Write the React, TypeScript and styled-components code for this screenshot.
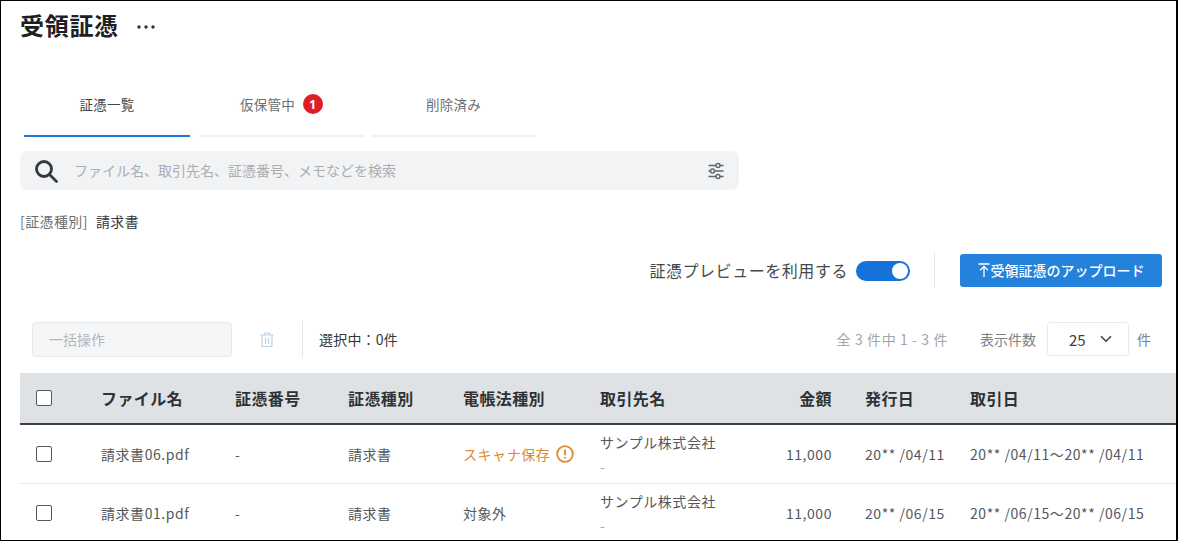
import React from 'react'
import styled, { createGlobalStyle } from 'styled-components'

const GlobalStyle = createGlobalStyle`
    html, body {
        margin: 0;
        padding: 0;
        background: #fff;
    }
    body {
        font-family: 'Noto Sans CJK JP', 'Noto Sans', sans-serif;
        color: #3b4043;
    }
    * {
        box-sizing: border-box;
    }
`

const Frame = styled.div`
    width: 1178px;
    height: 541px;
    border: 1px solid #000;
    border-right-width: 2px;
    overflow: hidden;
    background: #fff;
    padding: 0 0 0 19px;
`

const TitleRow = styled.div`
    display: flex;
    align-items: center;
    height: 48px;
    gap: 17px;
`

const Title = styled.h1`
    margin: 0;
    font-size: 24px;
    letter-spacing: 0.7px;
    line-height: 48px;
    font-weight: 700;
    color: #1d2022;
`

const MoreDots = styled.svg`
    width: 20px;
    height: 6px;
    margin-top: 3px;
    fill: #2e3235;
`

const Tabs = styled.div`
    display: flex;
    margin: 36px 0 0 4px;
`

const TabItem = styled.div<{ $active?: boolean; $width: number; $gap: number }>`
    width: ${p => p.$width}px;
    margin-right: ${p => p.$gap}px;
    height: 52px;
    display: flex;
    align-items: center;
    justify-content: center;
    gap: 8px;
    padding-bottom: 12px;
    font-size: 13.5px;
    letter-spacing: 0.2px;
    color: ${p => (p.$active ? '#3f4448' : '#6b7074')};
    border-bottom: 2px solid ${p => (p.$active ? '#1f78d1' : '#f1f2f3')};
`

const Badge = styled.span`
    width: 20px;
    height: 20px;
    border-radius: 50%;
    background: #dc1e26;
    color: #fff;
    font-family: 'Noto Sans', sans-serif;
    font-size: 12px;
    font-weight: 700;
    display: flex;
    align-items: center;
    justify-content: center;
`

const SearchBar = styled.div`
    width: 719px;
    height: 39px;
    margin-top: 14px;
    background: #f1f3f5;
    border-radius: 8px;
    display: flex;
    align-items: center;
    padding: 0 15px 0 13px;
    gap: 15px;
`

const SearchText = styled.span`
    flex: 1;
    font-size: 14px;
    color: #a9aeb3;
    padding-bottom: 1px;
`

const FilterLine = styled.div`
    margin-top: 21px;
    height: 20px;
    display: flex;
    align-items: center;
    gap: 8px;
    font-size: 14px;
    letter-spacing: 0.4px;
`

const FilterKey = styled.span`
    color: #6b7074;
`

const FilterValue = styled.span`
    color: #35393c;
`

const ActionRow = styled.div`
    display: flex;
    align-items: center;
    justify-content: flex-end;
    height: 34px;
    margin-top: 22px;
    padding-right: 14px;
`

const PreviewLabel = styled.span`
    font-size: 16px;
    letter-spacing: 0.55px;
    color: #45494d;
    margin-right: 8px;
`

const Toggle = styled.div`
    width: 54px;
    height: 20px;
    margin-top: 1px;
    border-radius: 10px;
    background: #1472d8;
    display: flex;
    align-items: center;
    justify-content: flex-end;
    padding-right: 2px;
`

const ToggleKnob = styled.span`
    width: 16px;
    height: 16px;
    border-radius: 50%;
    background: #fff;
`

const VDivider = styled.span<{ $height: number; $ml: number; $mr: number }>`
    width: 1px;
    height: ${p => p.$height}px;
    margin: 0 ${p => p.$mr}px 0 ${p => p.$ml}px;
    background: #e3e5e7;
`

const UploadButton = styled.button`
    width: 202px;
    height: 33px;
    border: none;
    border-radius: 3px;
    background: #2582dc;
    color: #fff;
    font-family: inherit;
    font-size: 14px;
    font-weight: 500;
    display: flex;
    align-items: center;
    justify-content: center;
    gap: 1px;
    padding: 0;
`

const BulkRow = styled.div`
    display: flex;
    align-items: center;
    height: 36px;
    margin-top: 34px;
    padding: 0 25px 0 12px;
`

const BulkSelect = styled.div`
    width: 200px;
    height: 35px;
    border: 1px solid #e8eaec;
    border-radius: 3px;
    background: #f5f6f7;
    color: #b3b7bb;
    font-size: 14px;
    display: flex;
    align-items: center;
    padding-left: 16px;
`

const TrashIcon = styled.svg`
    width: 14px;
    height: 15px;
    margin-left: 28px;
    fill: none;
    stroke: #bcd2e6;
    stroke-width: 1.2;
`

const SelectedText = styled.span`
    font-size: 14px;
    letter-spacing: 0.2px;
    color: #35393c;
`

const Pager = styled.div`
    margin-left: auto;
    display: flex;
    align-items: center;
`

const CountText = styled.span`
    font-size: 14px;
    letter-spacing: 0.6px;
    color: #a2a6aa;
    margin-right: 32px;
`

const PageLabel = styled.span`
    font-size: 14px;
    color: #7d8286;
`

const PageSelect = styled.div`
    width: 82px;
    height: 34px;
    margin: 0 8px 0 11px;
    border: 1px solid #e8eaec;
    border-radius: 3px;
    display: flex;
    align-items: center;
    padding-left: 21px;
    gap: 14px;
    font-size: 15px;
    color: #3b4043;
`

const Table = styled.table`
    width: 100%;
    margin-top: 16px;
    border-collapse: collapse;
    table-layout: fixed;
`

const HeadCell = styled.th<{ $width: number; $right?: boolean; $pl?: number }>`
    width: ${p => p.$width}px;
    height: 51px;
    padding: 0 0 0 ${p => p.$pl ?? 0}px;
    background: #dfe2e5;
    border-bottom: 2px solid #3a4046;
    font-size: 16px;
    letter-spacing: 0.4px;
    font-weight: 700;
    color: #2e3235;
    text-align: ${p => (p.$right ? 'right' : 'left')};
`

const Row = styled.tr`
    height: 59px;
    border-bottom: 1px solid #e8eaec;
`

const Cell = styled.td<{ $right?: boolean; $nowrap?: boolean; $pl?: number }>`
    padding: 0 0 0 ${p => p.$pl ?? 0}px;
    font-size: 14px;
    letter-spacing: 0.55px;
    color: #53585c;
    text-align: ${p => (p.$right ? 'right' : 'left')};
    white-space: ${p => (p.$nowrap ? 'nowrap' : 'normal')};
`

const CheckWrap = styled.div`
    display: flex;
    padding-left: 16px;
`

const CheckBox = styled.span`
    width: 16px;
    height: 16px;
    border: 1.5px solid #54595d;
    border-radius: 2px;
    background: #fff;
`

const Warn = styled.span`
    display: inline-flex;
    align-items: center;
    gap: 6px;
    color: #dd8a2c;
`

const PartnerName = styled.div`
    line-height: 18px;
`

const PartnerSub = styled.div`
    line-height: 18px;
    margin-top: 6px;
    color: #a2a6aa;
`

interface Doc {
    file: string
    law: string
    warn?: boolean
    issued: string
    from: string
}

const DOCS: Doc[] = [
    { file: '請求書06.pdf', law: 'スキャナ保存', warn: true, issued: '20** /04/11', from: '20** /04/11～20** /04/11' },
    { file: '請求書01.pdf', law: '対象外', issued: '20** /06/15', from: '20** /06/15～20** /06/15' },
]

const App: React.FC = () => {
    return (
        <Frame>
            <GlobalStyle />
            <TitleRow>
                <Title>受領証憑</Title>
                <MoreDots viewBox="0 0 20 6">
                    <circle cx="3" cy="3" r="1.7" />
                    <circle cx="10" cy="3" r="1.7" />
                    <circle cx="17" cy="3" r="1.7" />
                </MoreDots>
            </TitleRow>
            <Tabs>
                <TabItem $active $width={166} $gap={9}>証憑一覧</TabItem>
                <TabItem $width={165} $gap={7}>
                    仮保管中
                    <Badge>1</Badge>
                </TabItem>
                <TabItem $width={165} $gap={0}>削除済み</TabItem>
            </Tabs>
            <SearchBar>
                <svg width="26" height="26" viewBox="0 0 26 26" fill="none" stroke="#33393e" strokeWidth="2.8">
                    <circle cx="11" cy="11" r="7.5" />
                    <path d="M16.5 16.5 L23.5 23.5" strokeLinecap="round" />
                </svg>
                <SearchText>ファイル名、取引先名、証憑番号、メモなどを検索</SearchText>
                <svg width="16" height="18" viewBox="0 0 16 18" fill="none" stroke="#5e666d" strokeWidth="1.4">
                    <path d="M0.5 3.5H8M12 3.5H15.5M0.5 9H2.5M6.5 9H15.5M0.5 14.5H8M12 14.5H15.5" />
                    <circle cx="10" cy="3.5" r="2" />
                    <circle cx="4.5" cy="9" r="2" />
                    <circle cx="10" cy="14.5" r="2" />
                </svg>
            </SearchBar>
            <FilterLine>
                <FilterKey>[証憑種別]</FilterKey>
                <FilterValue>請求書</FilterValue>
            </FilterLine>
            <ActionRow>
                <PreviewLabel>証憑プレビューを利用する</PreviewLabel>
                <Toggle>
                    <ToggleKnob />
                </Toggle>
                <VDivider $height={36} $ml={24} $mr={25} />
                <UploadButton>
                    <svg width="12" height="15" viewBox="0 0 12 15" fill="none" stroke="#fff" strokeWidth="1.3">
                        <path d="M0.5 1H11.5M6 14V3.5M2.2 7.2L6 3.4L9.8 7.2" />
                    </svg>
                    受領証憑のアップロード
                </UploadButton>
            </ActionRow>
            <BulkRow>
                <BulkSelect>一括操作</BulkSelect>
                <TrashIcon viewBox="0 0 14 15">
                    <path d="M0.5 3H13.5M4.5 3V1H9.5V3M2 3V14.5H12V3M5.5 6V12M8.5 6V12" />
                </TrashIcon>
                <VDivider $height={36} $ml={28} $mr={16} />
                <SelectedText>選択中：0件</SelectedText>
                <Pager>
                    <CountText>全 3 件中 1 - 3 件</CountText>
                    <PageLabel>表示件数</PageLabel>
                    <PageSelect>
                        25
                        <svg width="12" height="8" viewBox="0 0 12 8" fill="none" stroke="#3b4043" strokeWidth="1.6">
                            <path d="M1 1.2L6 6.2L11 1.2" />
                        </svg>
                    </PageSelect>
                    <PageLabel>件</PageLabel>
                </Pager>
            </BulkRow>
            <Table>
                <thead>
                    <tr>
                        <HeadCell $width={81}>
                            <CheckWrap>
                                <CheckBox />
                            </CheckWrap>
                        </HeadCell>
                        <HeadCell $width={134}>ファイル名</HeadCell>
                        <HeadCell $width={113}>証憑番号</HeadCell>
                        <HeadCell $width={115}>証憑種別</HeadCell>
                        <HeadCell $width={137}>電帳法種別</HeadCell>
                        <HeadCell $width={126}>取引先名</HeadCell>
                        <HeadCell $width={106} $right>金額</HeadCell>
                        <HeadCell $width={138} $pl={33}>発行日</HeadCell>
                        <HeadCell $width={206}>取引日</HeadCell>
                    </tr>
                </thead>
                <tbody>
                    {DOCS.map(doc => (
                        <Row key={doc.file}>
                            <Cell>
                                <CheckWrap>
                                    <CheckBox />
                                </CheckWrap>
                            </Cell>
                            <Cell>{doc.file}</Cell>
                            <Cell>-</Cell>
                            <Cell>請求書</Cell>
                            <Cell>
                                {doc.warn ? (
                                    <Warn>
                                        {doc.law}
                                        <svg width="18" height="18" viewBox="0 0 18 18" fill="none" stroke="#dd8a2c" strokeWidth="1.8">
                                            <circle cx="9" cy="9" r="7.8" />
                                            <path d="M9 4.5V10.2M9 12V13.6" />
                                        </svg>
                                    </Warn>
                                ) : (
                                    doc.law
                                )}
                            </Cell>
                            <Cell $nowrap>
                                <PartnerName>サンプル株式会社</PartnerName>
                                <PartnerSub>-</PartnerSub>
                            </Cell>
                            <Cell $right>11,000</Cell>
                            <Cell $nowrap $pl={33}>{doc.issued}</Cell>
                            <Cell $nowrap>{doc.from}</Cell>
                        </Row>
                    ))}
                </tbody>
            </Table>
        </Frame>
    )
}

export default App
